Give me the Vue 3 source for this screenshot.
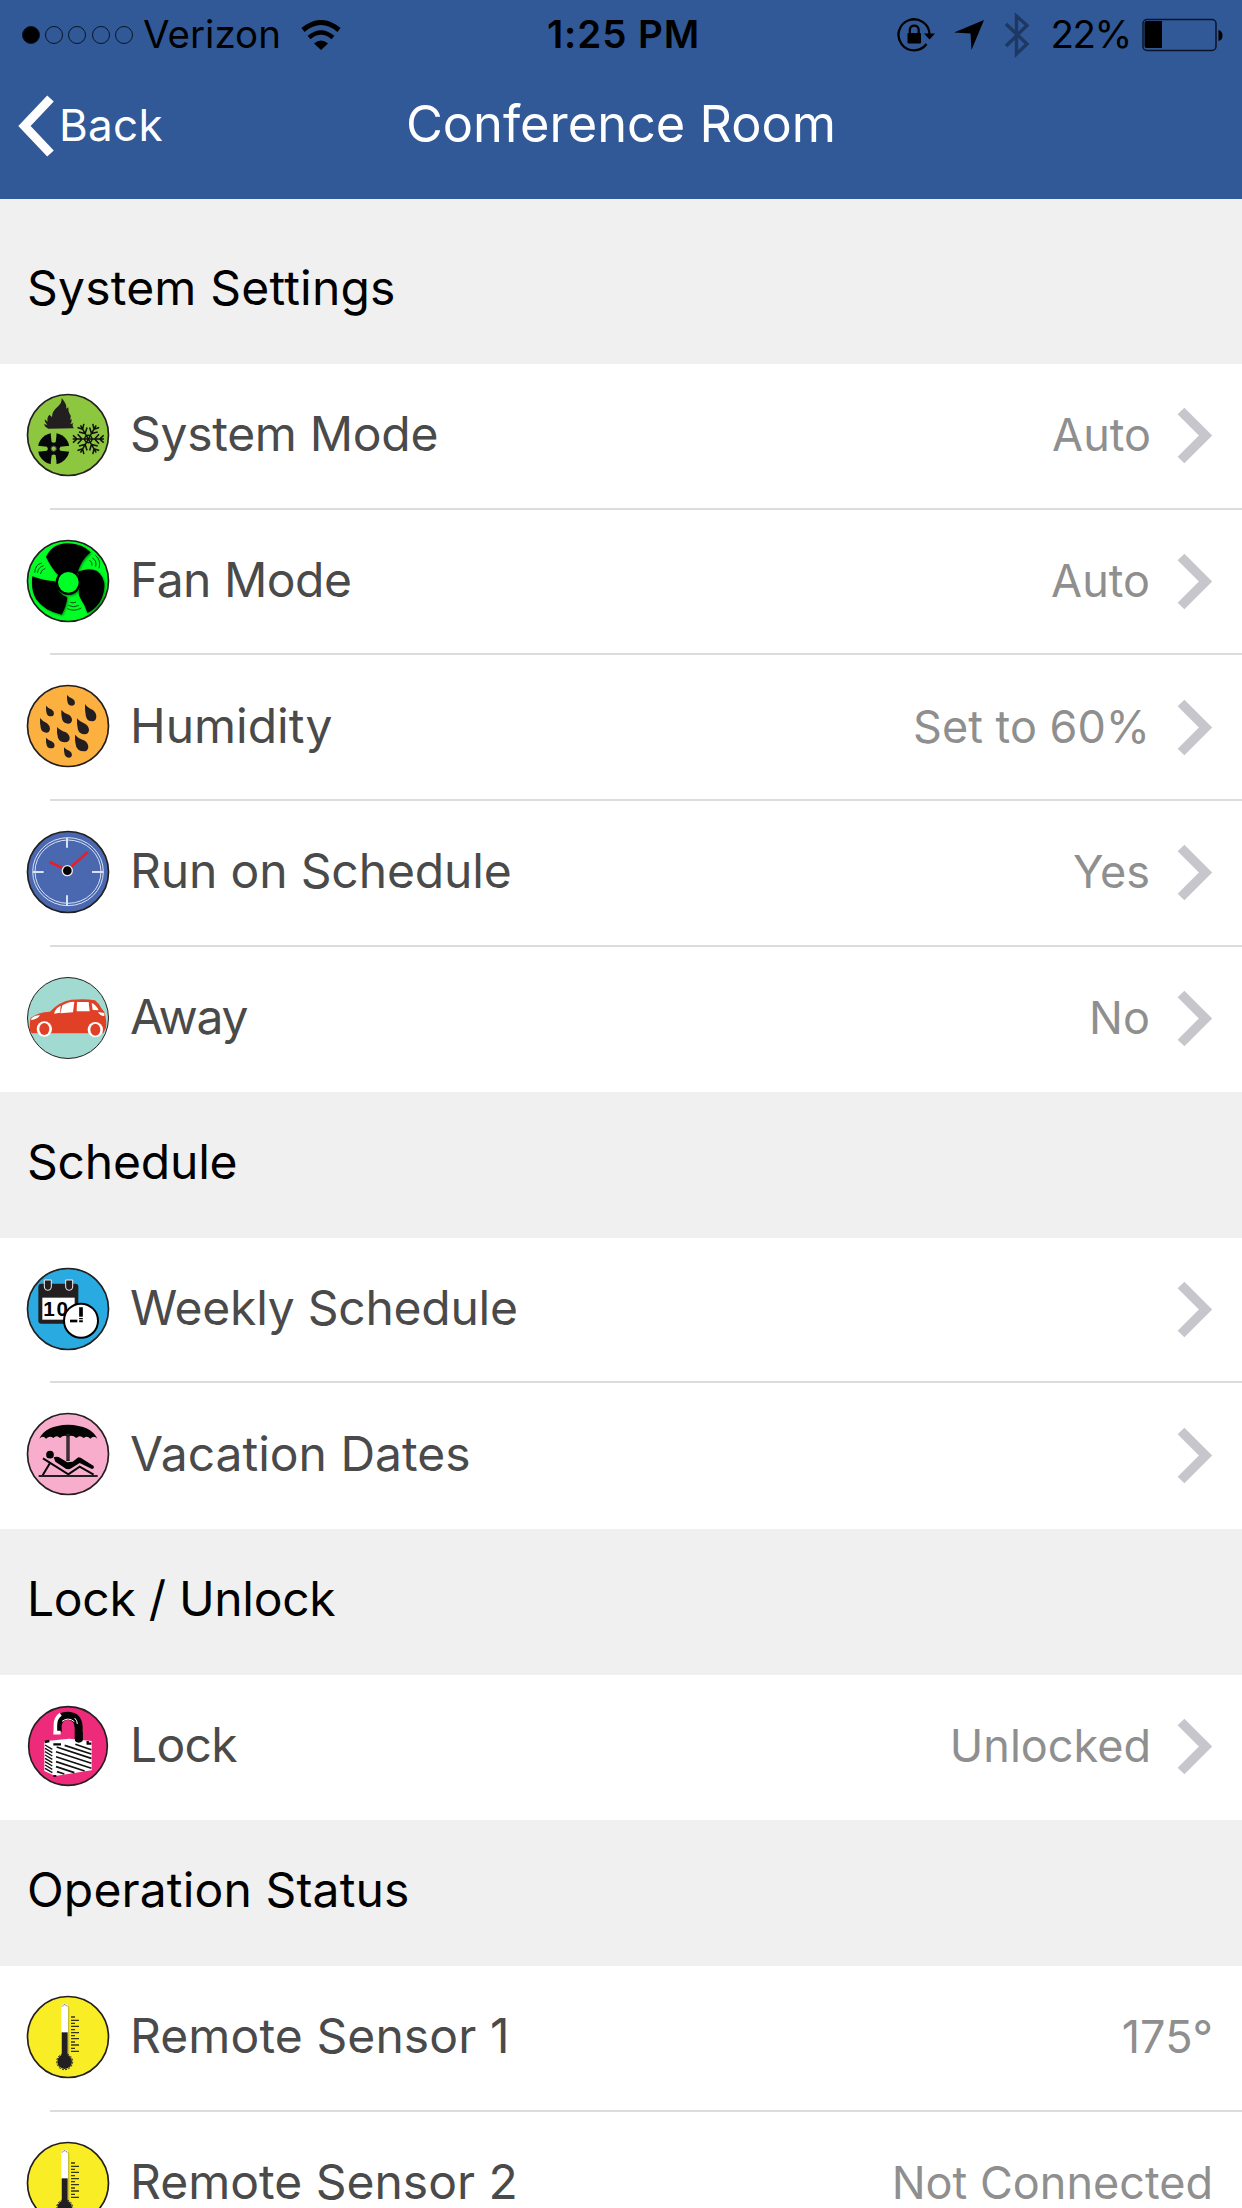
<!-- ============================================
  App.vue —— thermostat settings for one room
============================================ -->

<template>
  <div class="screen">
    <header class="top">
      <!-- status bar -->
      <div class="status-bar">
        <div class="status-left">
          <span v-for="n in 5" :key="n" :class="['dot', { full: n === 1 }]"></span>
          <span class="carrier">Verizon</span>
          <svg class="wifi" viewBox="0 0 42 30">
            <path d="M3 10 Q21 -5 39 10" fill="none" stroke="#000" stroke-width="5" />
            <path d="M9 17.5 Q21 7.5 33 17.5" fill="none" stroke="#000" stroke-width="4.5" />
            <path d="M14 23.5 Q21 17.5 28 23.5 L21 30 Z" />
          </svg>
        </div>
        <div class="time">1:25 PM</div>
        <div class="status-right">
          <svg class="rotation" viewBox="0 0 38 34">
            <path d="M29.5 26 A15.5 15.5 0 1 1 32.5 16" fill="none" stroke="#000" stroke-width="2.3" />
            <path d="M27 15.5 H38 L32.5 21.5 Z" />
            <rect x="10.5" y="15" width="13.5" height="10.5" rx="1" />
            <path d="M12.8 16 V11.5 A4.5 4.5 0 0 1 21.7 11.5 V16" fill="none" stroke="#000" stroke-width="2.2" />
          </svg>
          <svg class="location" viewBox="0 0 30 30">
            <path d="M30 0 L17.5 30 L16.5 13.5 L0 12.5 Z" />
          </svg>
          <svg class="bluetooth" viewBox="0 0 26 46">
            <path d="M2 12 L23 32 L12.5 42 V4 L23 13.5 L2 34" fill="none" stroke="#1f3862" stroke-width="3.4" />
          </svg>
          <span class="percent">22%</span>
          <svg class="battery" viewBox="0 0 81 34">
            <rect x="1" y="1.5" width="73" height="31" rx="4" fill="none" stroke="#0a1424" stroke-width="1.5" />
            <path d="M4.5 3 H20 V30 H4.5 Q2.5 30 2.5 28 V5 Q2.5 3 4.5 3 Z" />
            <path d="M76.5 12 Q80.5 13 80.5 17.5 Q80.5 22 76.5 23 Z" />
          </svg>
        </div>
      </div>

      <!-- navigation bar -->
      <div class="nav-bar">
        <div class="back">
          <svg class="back-arrow" viewBox="0 0 37 62">
            <path d="M32.5 3.5 L6.5 31 L32.5 58.5" fill="none" stroke="#fff" stroke-width="9" />
          </svg>
          <span>Back</span>
        </div>
        <h1>Conference Room</h1>
      </div>
    </header>

    <!-- setting groups -->
    <section v-for="(section, i) in sections" :key="section.title">
      <h2 :class="{ first: i === 0 }" :style="{ letterSpacing: section.spacing + 'px' }">{{ section.title }}</h2>
      <div class="row" v-for="item in section.items" :key="item.label">
        <svg class="icon" viewBox="0 0 252 252">
          <circle cx="126" cy="126" :r="item.icon === 'lock' ? 118 : 121.5" :fill="colors[item.icon]" stroke="#231f20" :stroke-width="item.icon === 'car' ? 3 : 5" />

          <!-- flame, fan and snowflake -->
          <g v-if="item.icon === 'mode'" fill="#231f20">
            <path d="M67 107 Q54 101 55 93 L64 96 Q55 88 56 79 L65 86 Q62 74 70 65 L78 72 Q78 55 94 42 Q109 29 107 15 Q124 35 121 47 L127 43 Q126 54 131 63 Q137 69 132 80 L137 78 Q138 86 133 94 L142 90 Q137 98 144 106 Z" />
            <g transform="translate(83 167)">
              <circle r="47" fill="#070809" />
              <path v-for="a in [0, 90, 180, 270]" :key="a" :transform="`rotate(${a})`" d="M-9 -49 Q-8 -32 -6 -20 Q0 -15 6 -20 Q8 -32 9 -49 Z" fill="#8dc63f" />
              <circle r="8" fill="#8dc63f" stroke="#3c3c3c" stroke-width="3" />
            </g>
            <g transform="translate(187 138)" fill="none" stroke="#111" stroke-width="4.5">
              <path v-for="a in [30, 90, 150, 210, 270, 330]" :key="a" :transform="`rotate(${a})`" d="M0 0 V-47 M-11 -46 L0 -34 L11 -46 M-14 -32 L0 -19 L14 -32" />
              <circle r="11" />
            </g>
          </g>

          <!-- fan -->
          <g v-else-if="item.icon === 'fan'">
            <g class="blades">
              <path d="M60 54 Q78 14 125 13 Q170 14 194 40 Q163 65 154 105 Q127 83 97 109 Q78 90 60 54 Z" />
              <path d="M155 98 Q188 84 213 96 Q237 115 235 145 Q230 200 184 222 Q178 200 164 179 Q155 165 160 149 Q163 120 155 98 Z" />
              <path d="M19 112 Q52 125 88 127 Q94 165 124 175 Q121 203 107 227 Q55 216 30 180 Q14 153 19 112 Z" />
              <circle cx="127" cy="130" r="38" />
            </g>
            <circle cx="127" cy="130" r="31" fill="#00ff24" />
            <g fill="none" stroke="#054f10" stroke-width="3">
              <path d="M26 101 Q28 75 48 72 M34 102 Q37 84 53 80 M43 105 Q46 92 58 88" />
              <path d="M190 64 Q200 67 198 80 M199 57 Q213 64 209 83 M208 49 Q226 63 219 88" />
              <path d="M133 190 Q142 194 150 189 M127 199 Q143 208 159 199 M124 209 Q145 219 166 207" />
            </g>
          </g>

          <!-- drops -->
          <g v-else-if="item.icon === 'drops'" fill="#231f20">
            <path v-for="(d, k) in drops" :key="k" :transform="`translate(${d[0]} ${d[1]}) scale(${d[2] / 10} ${d[3] / 10})`" d="M0 0 Q2 2 7 3.5 Q10 5 10 7.5 Q9.5 10 6.5 10 Q2 10 .8 7 Q-.3 4 0 0 Z" />
          </g>

          <!-- clock -->
          <g v-else-if="item.icon === 'clock'">
            <g fill="none" stroke="#d9e2f5">
              <ellipse cx="126" cy="125" rx="106" ry="102" stroke-width="3" />
              <ellipse cx="126" cy="125" rx="99" ry="95" stroke-width="3" />
              <path d="M123 24 V53 M123 196 V227 M21 126 H53 M198 126 H232" stroke-width="6" />
            </g>
            <path d="M71 96 L124 121 L185 66" fill="none" stroke="#ed1c24" stroke-width="7.5" />
            <circle cx="124" cy="122" r="15" stroke="#eee" stroke-width="4" />
          </g>

          <!-- car -->
          <g v-else-if="item.icon === 'car'">
            <path d="M12 164 Q10 139 14 126 Q36 108 72 107 Q99 77 136 71 Q178 67 207 73 Q219 82 226 97 L235 108 Q243 133 240 155 L232 172 H76 L18 172 Z" fill="#e04126" />
            <g fill="#fff">
              <path d="M84 113 Q88 96 104 89 L102 110 Z M109 88 Q124 78 145 77 L141 109 L103 112 Z M153 78 H188 L191 106 H152 Z M197 81 Q210 86 218 103 L200 102 Z M216 108 L235 111 V120 Q223 121 216 108 Z M15 129 Q25 116 42 118 Q35 129 16 132 Z" />
              <circle cx="55" cy="159" r="23" />
              <circle cx="208" cy="161" r="23" />
            </g>
            <g fill="#e04126">
              <ellipse cx="55" cy="159" rx="15" ry="18" />
              <ellipse cx="208" cy="161" rx="15" ry="18" />
            </g>
          </g>

          <!-- calendar with clock -->
          <g v-else-if="item.icon === 'calendar'">
            <rect x="37" y="50" width="120" height="120" rx="9" fill="#231f20" />
            <rect x="49" y="92" width="97" height="66" fill="#fff" />
            <path d="M55 39 H76 V60 Q76 70 65.5 70 Q55 70 55 60 Z M119 39 H140 V60 Q140 70 129.5 70 Q119 70 119 60 Z" fill="#231f20" stroke="#eee" stroke-width="3" />
            <text x="52" y="147" class="day">10</text>
            <circle cx="165" cy="161" r="51" fill="#fff" stroke="#000" stroke-width="6" />
            <path d="M165 121 V149 M165 153 V157 M165 160 V166" stroke="#000" stroke-width="11" />
            <path d="M132 162 H154" stroke="#000" stroke-width="8" />
          </g>

          <!-- umbrella and lounger -->
          <g v-else-if="item.icon === 'beach'">
            <path d="M40 80 Q58 40 126 38 Q196 40 214 80 Q204 69 193 80 Q184 69 173 78 Q161 67 151 78 Q138 67 126 74 Q114 67 102 78 Q92 67 82 78 Q71 69 60 80 Q51 69 40 80 Z" fill="#050505" />
            <path d="M126 65 V147" stroke="#231f20" stroke-width="10" />
            <path d="M126 76 V143" stroke="#77515f" stroke-width="2" />
            <circle cx="72" cy="128" r="11.5" />
            <path d="M83 136 Q95 132 104 139 L124 151 L140 149 L157 136 Q164 136 171 142 L202 161 Q207 168 198 171 L161 153 L136 169 Q124 176 112 165 L88 149 Z" />
            <path d="M51 139 L127 187 L161 164 L203 188 M72 153 L50 190" fill="none" stroke="#050505" stroke-width="6" />
            <path d="M38 192 H215" stroke="#231f20" stroke-width="6" />
          </g>

          <!-- padlock -->
          <g v-else-if="item.icon === 'lock'">
            <path d="M95 84 V64 Q98 35 126 35 Q157 37 158 70 V112" fill="none" stroke="#050505" stroke-width="24" />
            <path d="M88 91 V64 Q88 42 104 31 M82 86 H104" fill="none" stroke="#fff" stroke-width="11" />
            <path d="M108 52 Q127 38 145 53 M146 42 Q154 50 154 60" fill="none" stroke="#fff" stroke-width="3" />
            <path d="M55 112 L130 104 L197 111 V199 L88 216 L55 201 Z" fill="#fff" />
            <path d="M147 84 H170 V111 Q158 121 147 111 Z" fill="#050505" />
            <path d="M82 121 H105 M56 114 L70 111 M185 111 V119 H196" fill="none" stroke="#050505" stroke-width="7" />
            <path d="M57 123 L79 136 M57 133 L79 146 M57 143 L79 156 M57 153 L79 166 M57 163 L79 176 M57 173 L79 186 M57 183 L79 196 M57 193 L79 206" stroke="#111" stroke-width="4" />
            <path d="M93 203 L115 210 M90 188 L145 206 M90 173 L176 201 M90 158 L196 193 M90 143 L196 178 M92 129 L196 163 M116 124 L196 150 M148 121 L196 137" stroke="#111" stroke-width="5" />
            <path d="M82 216 H91" stroke="#111" stroke-width="6" />
          </g>

          <!-- thermometer -->
          <g v-else-if="item.icon === 'thermo'">
            <rect x="108" y="30" width="22" height="160" rx="10" fill="#c8be32" />
            <rect x="106" y="26" width="20" height="164" rx="10" fill="#fff" />
            <path d="M109 34 Q116 24 123 34" fill="none" stroke="#333" stroke-width="3" stroke-dasharray="4 3" />
            <rect x="107" y="112" width="18" height="76" fill="#231f20" />
            <circle cx="116" cy="200" r="22" fill="#231f20" />
            <circle cx="116" cy="200" r="24" fill="none" stroke="#231f20" stroke-width="3" stroke-dasharray="6 4" />
            <path d="M135 76 H159 M135 94 H159 M135 113 H159 M135 131 H159 M135 150 H159 M135 169 H159 M135 66 H147 M135 85 H147 M135 104 H147 M135 122 H147 M135 141 H147 M135 160 H147" stroke="#3a3618" stroke-width="4" />
          </g>
        </svg>
        <div class="content">
          <span class="label" :style="{ letterSpacing: item.spacing + 'px' }">{{ item.label }}</span>
          <span class="value">{{ item.value }}</span>
          <svg v-if="item.link" class="chevron" viewBox="0 0 36 57">
            <path d="M4 4 L28.5 28.5 L4 53" fill="none" stroke="#c7c6cc" stroke-width="9.5" />
          </svg>
        </div>
      </div>
    </section>
  </div>
</template>

<script setup>
import { ref } from 'vue'

// spacing: letter-spacing in px
const sections = ref([
  {
    title: 'System Settings',
    spacing: 0.2,
    items: [
      { label: 'System Mode', value: 'Auto', icon: 'mode', link: true, spacing: -0.3 },
      { label: 'Fan Mode', value: 'Auto', icon: 'fan', link: true, spacing: -0.5 },
      { label: 'Humidity', value: 'Set to 60%', icon: 'drops', link: true, spacing: 0 },
      { label: 'Run on Schedule', value: 'Yes', icon: 'clock', link: true, spacing: -0.15 },
      { label: 'Away', value: 'No', icon: 'car', link: true, spacing: -1.3 }
    ]
  },
  {
    title: 'Schedule',
    spacing: -0.2,
    items: [
      { label: 'Weekly Schedule', value: '', icon: 'calendar', link: true, spacing: -0.25 },
      { label: 'Vacation Dates', value: '', icon: 'beach', link: true, spacing: 0 }
    ]
  },
  {
    title: 'Lock / Unlock',
    spacing: -0.3,
    items: [{ label: 'Lock', value: 'Unlocked', icon: 'lock', link: true, spacing: -0.7 }]
  },
  {
    title: 'Operation Status',
    spacing: 0.15,
    items: [
      { label: 'Remote Sensor 1', value: '175°', icon: 'thermo', link: false, spacing: 0.1 },
      { label: 'Remote Sensor 2', value: 'Not Connected', icon: 'thermo', link: false, spacing: 0 }
    ]
  }
])

// circle fill of each icon
const colors = {
  mode: '#8dc63f',
  fan: '#00ff24',
  drops: '#fbb040',
  clock: '#4a68b0',
  car: '#a1dad0',
  calendar: '#29abe2',
  beach: '#f7adcb',
  lock: '#ee2a7b',
  thermo: '#f9ed25'
}

// x, y, width, height
const drops = [
  [123, 33, 24, 32],
  [60, 65, 24, 32],
  [106, 78, 32, 41],
  [177, 60, 34, 52],
  [42, 102, 30, 44],
  [153, 103, 36, 48],
  [93, 129, 38, 46],
  [60, 161, 26, 32],
  [147, 152, 40, 50],
  [114, 190, 24, 31]
]
</script>

<style>
body {
  margin: 0;
  background: #fff;
}
</style>

<style scoped>
.screen {
  width: 1242px;
  height: 2208px;
  overflow: hidden;
  background: #fff;
  font-family: Inter, "Liberation Sans", sans-serif;
}

.top {
  height: 199px;
  background: #315997;
}

/* status bar */
.status-bar {
  display: grid;
  grid-template-columns: 1fr auto 1fr;
  align-items: center;
  height: 69px;
  font-size: 38.5px;
  line-height: 69px;
}

.status-left,
.status-right {
  display: flex;
  align-items: center;
}

.status-left {
  padding-left: 22px;
}

.dot {
  box-sizing: border-box;
  width: 18px;
  height: 18px;
  margin-right: 5.2px;
  border: 1px solid #0a1424;
  border-radius: 50%;
}

.dot.full {
  background: #000;
}

.carrier {
  margin-left: 5px;
}

.wifi {
  width: 42px;
  height: 30px;
  margin-left: 19px;
}

.time {
  padding-left: 5px;
  font-weight: 600;
  letter-spacing: 0.9px;
}

.status-right {
  justify-content: flex-end;
  padding-right: 19px;
}

.rotation {
  width: 38px;
  height: 34px;
  margin-right: 19px;
}

.location {
  width: 30px;
  height: 30px;
  margin-right: 20px;
}

.bluetooth {
  width: 26px;
  height: 46px;
  margin-right: 20px;
}

.percent {
  letter-spacing: -1.4px;
}

.battery {
  width: 81px;
  height: 34px;
  margin-left: 11px;
}

/* navigation bar */
.nav-bar {
  display: grid;
  grid-template-columns: 1fr auto 1fr;
  align-items: center;
  height: 114px;
  color: #fff;
}

.back {
  display: flex;
  align-items: center;
  padding-left: 18px;
  font-size: 44px;
}

.back span {
  padding-bottom: 2px;
  letter-spacing: 0.3px;
}

.back-arrow {
  width: 37px;
  height: 62px;
  margin-right: 4px;
}

h1 {
  margin: 0;
  padding-bottom: 6px;
  font-size: 50.5px;
  font-weight: 400;
}

/* groups */
h2 {
  box-sizing: border-box;
  height: 145.65px;
  margin: 0;
  padding: 0 27px;
  background: #f0f0f0;
  color: #000;
  font-size: 48px;
  font-weight: 400;
  line-height: 140px;
}

h2.first {
  height: 165px;
  padding-top: 19.4px;
}

.row {
  display: flex;
  height: 145.65px;
}

.icon {
  position: relative;
  z-index: 1;
  width: 84px;
  height: 84px;
  margin: 29px -60px 0 26px;
}

.blades {
  filter: drop-shadow(3px 3px 3px rgba(0, 60, 0, 0.6));
}

.content {
  display: flex;
  flex: 1;
  align-items: center;
  box-sizing: border-box;
  padding: 0 29px 0 80px;
  border-bottom: 2px solid #dcdcdc;
}

.row:last-child .content {
  border-bottom-color: transparent;
}

.label {
  flex: 1;
  padding-bottom: 4px;
  color: #4a4a4a;
  font-size: 48px;
}

.value {
  padding-bottom: 2px;
  color: #8f8f8f;
  font-size: 45px;
}

.chevron {
  width: 36px;
  height: 57px;
  margin-left: 27px;
}

.row:nth-child(2) .value + .chevron {
  margin-left: 26px;
}

.day {
  font-family: "Liberation Sans", sans-serif;
  font-size: 62px;
  font-weight: bold;
  letter-spacing: 5px;
}
</style>
